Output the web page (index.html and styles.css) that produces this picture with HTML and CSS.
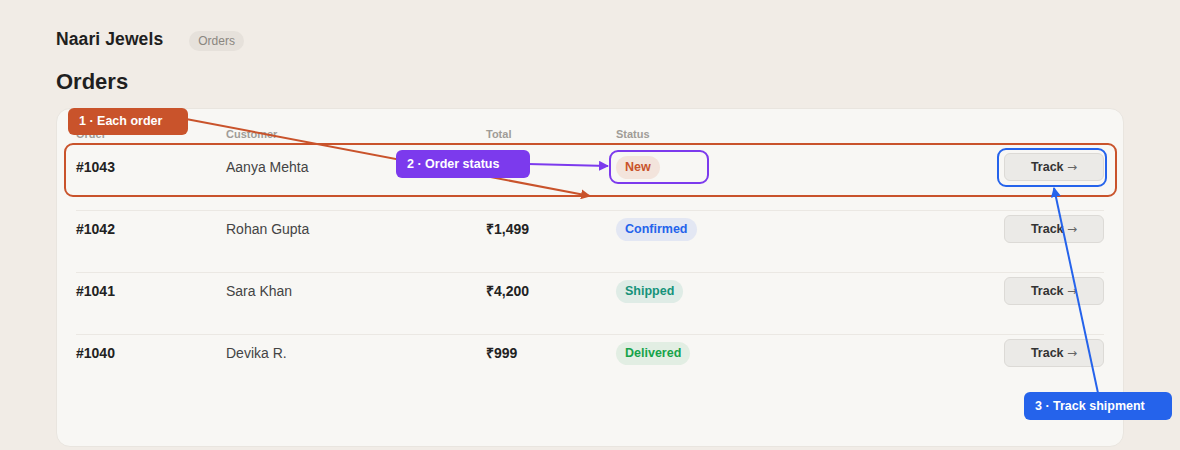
FILE: index.html
```html
<!DOCTYPE html>
<html>
<head>
<meta charset="utf-8">
<link rel="stylesheet" href="styles.css">
</head>
<body>
<div class="page">
  <header class="topbar">
    <div class="brand">Naari Jewels</div>
    <span class="crumb">Orders</span>
  </header>
  <h1 class="title">Orders</h1>
  <section class="card">
    <div class="row head">
      <div>Order</div><div>Customer</div><div>Total</div><div>Status</div><div></div>
    </div>
    <div class="row first">
      <div class="id">#1043</div><div class="cust">Aanya Mehta</div><div class="total"></div>
      <div><span class="badge new">New</span></div>
      <button class="track">Track <span class="arr">→</span></button>
    </div>
    <div class="row">
      <div class="id">#1042</div><div class="cust">Rohan Gupta</div><div class="total">₹1,499</div>
      <div><span class="badge confirmed">Confirmed</span></div>
      <button class="track">Track <span class="arr">→</span></button>
    </div>
    <div class="row">
      <div class="id">#1041</div><div class="cust">Sara Khan</div><div class="total">₹4,200</div>
      <div><span class="badge shipped">Shipped</span></div>
      <button class="track">Track <span class="arr">→</span></button>
    </div>
    <div class="row">
      <div class="id">#1040</div><div class="cust">Devika R.</div><div class="total">₹999</div>
      <div><span class="badge delivered">Delivered</span></div>
      <button class="track">Track <span class="arr">→</span></button>
    </div>
  </section>
</div>

<svg class="overlay" width="1180" height="450" viewBox="0 0 1180 450">
  <defs>
    <marker id="ao" markerWidth="10" markerHeight="10" refX="9" refY="5" orient="auto" markerUnits="userSpaceOnUse"><path d="M0,0 L10,5 L0,10 z" fill="#c9532b"/></marker>
    <marker id="ap" markerWidth="10" markerHeight="10" refX="9" refY="5" orient="auto" markerUnits="userSpaceOnUse"><path d="M0,0 L10,5 L0,10 z" fill="#7c3aed"/></marker>
    <marker id="ab" markerWidth="10" markerHeight="10" refX="9" refY="5" orient="auto" markerUnits="userSpaceOnUse"><path d="M0,0 L10,5 L0,10 z" fill="#2563eb"/></marker>
  </defs>
  <rect x="65" y="144" width="1051" height="52" rx="8" fill="none" stroke="#c9532b" stroke-width="2"/>
  <rect x="610" y="151" width="98" height="32" rx="8" fill="none" stroke="#7c3aed" stroke-width="2"/>
  <rect x="998" y="149" width="108" height="37" rx="8" fill="none" stroke="#2563eb" stroke-width="2"/>
  <line x1="186" y1="119" x2="590" y2="196" stroke="#c9532b" stroke-width="2" marker-end="url(#ao)"/>
  <line x1="528" y1="164" x2="608" y2="166" stroke="#7c3aed" stroke-width="2" marker-end="url(#ap)"/>
  <line x1="1098" y1="393" x2="1054" y2="188" stroke="#2563eb" stroke-width="2" marker-end="url(#ab)"/>
</svg>
<div class="note n1">1 · Each order</div>
<div class="note n2">2 · Order status</div>
<div class="note n3">3 · Track shipment</div>
</body>
</html>
```

FILE: styles.css
```css
html, body { margin: 0; padding: 0; }
body {
  background: #f1ece6;
  font-family: "Liberation Sans", Arial, sans-serif;
  color: #222;
  width: 1180px;
  height: 450px;
  overflow: hidden;
  position: relative;
}
.page { padding: 28px 56px 0; }
.topbar { display: flex; align-items: center; gap: 26px; height: 22px; }
.brand { font-size: 17.5px; font-weight: bold; color: #1f1f1f; letter-spacing: 0.1px; }
.crumb {
  background: #e6e1db; color: #8a8680; font-size: 12px;
  padding: 0 9px; height: 20px; line-height: 20px; border-radius: 10px;
  margin-top: 3px;
}
.title { font-size: 22px; line-height: 28px; font-weight: bold; margin: 18px 0 12px; color: #1f1f1f; }
.card {
  background: #f8f7f4; border: 1px solid #e9e5df; border-radius: 14px;
  padding: 18px 19px 51px;
  height: 339px; box-sizing: border-box;
}
.row {
  display: grid;
  grid-template-columns: 150px 260px 130px 1fr 100px;
  align-items: center;
  box-sizing: border-box;
  height: 62px; padding: 4px 0 30px;
  border-top: 1px solid #ebe8e3;
}
.row.first { border-top-color: transparent; }
.row.head {
  height: auto; border: 0; padding: 0 0 7px;
  font-size: 11px; line-height: 14px; color: #a09c97; font-weight: bold;
}
.row > div { line-height: 27px; font-size: 14px; }
.row.head > div { line-height: 14px; font-size: 11px; }
.id, .total { font-weight: bold; color: #222; }
.cust { color: #444; }
.badge {
  display: inline-block; font-size: 12.5px; font-weight: bold;
  padding: 0 9px; height: 23px; line-height: 23px; border-radius: 12px;
  vertical-align: middle;
}
.new { background: #f3e4dc; color: #c9532b; }
.confirmed { background: #e3e7f3; color: #2563eb; }
.shipped { background: #dfece6; color: #16937a; }
.delivered { background: #e2eee3; color: #16a34a; }
.track {
  width: 100px; height: 28px; box-sizing: border-box;
  background: #ebeae7; border: 1px solid #dcdad6; border-radius: 6px;
  font-family: inherit; font-size: 12.5px; font-weight: bold; color: #333;
  padding: 0; cursor: pointer;
}
.arr { font-weight: normal; color: #666; font-family: "DejaVu Sans", sans-serif; font-size: 12px; }
.overlay { position: absolute; left: 0; top: 0; pointer-events: none; }
.note {
  position: absolute; color: #fff; font-size: 12.5px; font-weight: bold;
  border-radius: 6px; box-sizing: border-box; height: 28px; line-height: 28px;
  padding: 0 11px;
}
.n1 { left: 68px; top: 108px; width: 120px; height: 27px; line-height: 27px; background: #c9532b; }
.n2 { left: 396px; top: 150px; width: 134px; background: #7c3aed; }
.n3 { left: 1024px; top: 392px; width: 148px; background: #2563eb; }
```
